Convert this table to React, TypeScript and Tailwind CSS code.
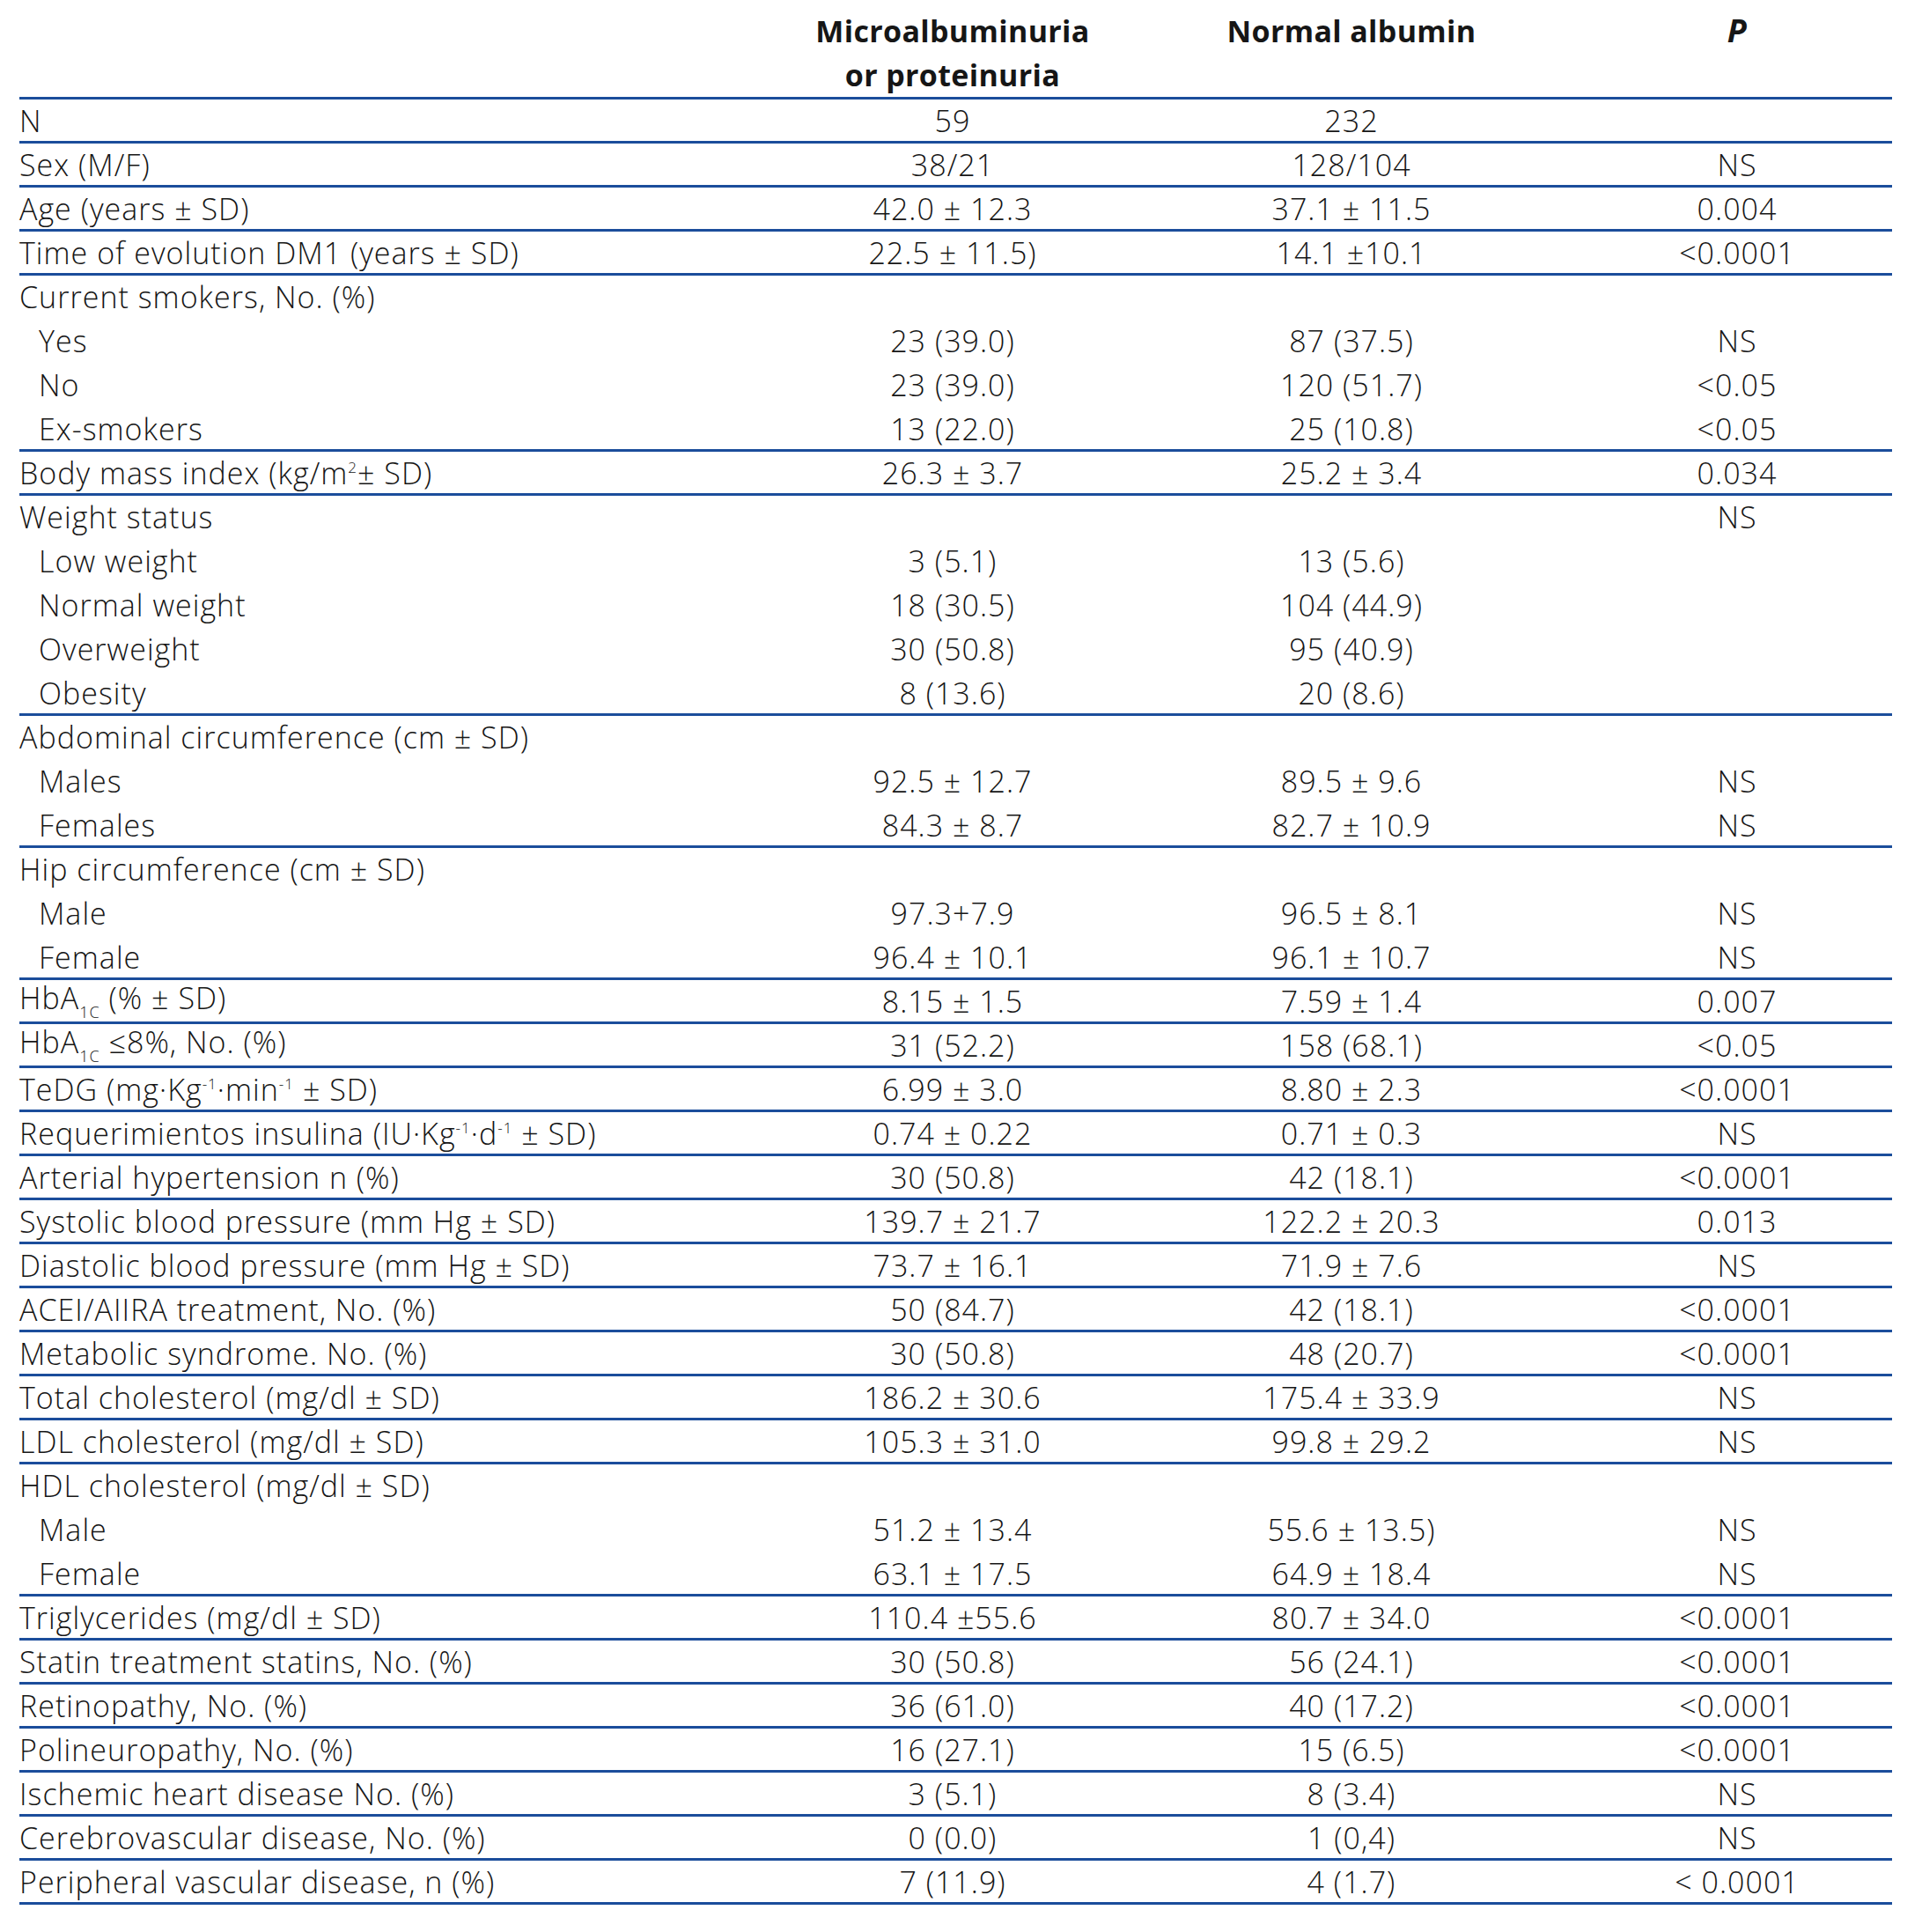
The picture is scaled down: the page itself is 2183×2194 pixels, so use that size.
import React from 'react';

type Row = {
  label: React.ReactNode;
  a?: string;
  b?: string;
  p?: string;
  sub?: boolean; // indented sub-row
  line?: boolean; // group ends here
};

const Sup = ({ children }: { children: React.ReactNode }) => (
  <span className="text-[17px] align-[13px]">{children}</span>
);
const Sub = ({ children }: { children: React.ReactNode }) => (
  <span className="text-[18px] align-[-10px]">{children}</span>
);

const rows: Row[] = [
  { label: 'N', a: '59', b: '232', line: true },
  { label: 'Sex (M/F)', a: '38/21', b: '128/104', p: 'NS', line: true },
  { label: 'Age (years ± SD)', a: '42.0 ± 12.3', b: '37.1 ± 11.5', p: '0.004', line: true },
  { label: 'Time of evolution DM1 (years ± SD)', a: '22.5 ± 11.5)', b: '14.1 ±10.1', p: '<0.0001', line: true },
  { label: 'Current smokers, No. (%)' },
  { label: 'Yes', sub: true, a: '23 (39.0)', b: '87 (37.5)', p: 'NS' },
  { label: 'No', sub: true, a: '23 (39.0)', b: '120 (51.7)', p: '<0.05' },
  { label: 'Ex-smokers', sub: true, a: '13 (22.0)', b: '25 (10.8)', p: '<0.05', line: true },
  {
    label: (
      <>
        Body mass index (kg/m<Sup>2</Sup>± SD)
      </>
    ),
    a: '26.3 ± 3.7',
    b: '25.2 ± 3.4',
    p: '0.034',
    line: true,
  },
  { label: 'Weight status', p: 'NS' },
  { label: 'Low weight', sub: true, a: '3 (5.1)', b: '13 (5.6)' },
  { label: 'Normal weight', sub: true, a: '18 (30.5)', b: '104 (44.9)' },
  { label: 'Overweight', sub: true, a: '30 (50.8)', b: '95 (40.9)' },
  { label: 'Obesity', sub: true, a: '8 (13.6)', b: '20 (8.6)', line: true },
  { label: 'Abdominal circumference (cm ± SD)' },
  { label: 'Males', sub: true, a: '92.5 ± 12.7', b: '89.5 ± 9.6', p: 'NS' },
  { label: 'Females', sub: true, a: '84.3 ± 8.7', b: '82.7 ± 10.9', p: 'NS', line: true },
  { label: 'Hip circumference (cm ± SD)' },
  { label: 'Male', sub: true, a: '97.3+7.9', b: '96.5 ± 8.1', p: 'NS' },
  { label: 'Female', sub: true, a: '96.4 ± 10.1', b: '96.1 ± 10.7', p: 'NS', line: true },
  {
    label: (
      <>
        HbA<Sub>1C</Sub> (% ± SD)
      </>
    ),
    a: '8.15 ± 1.5',
    b: '7.59 ± 1.4',
    p: '0.007',
    line: true,
  },
  {
    label: (
      <>
        HbA<Sub>1C</Sub> ≤8%, No. (%)
      </>
    ),
    a: '31 (52.2)',
    b: '158 (68.1)',
    p: '<0.05',
    line: true,
  },
  {
    label: (
      <>
        TeDG (mg·Kg<Sup>-1</Sup>·min<Sup>-1</Sup> ± SD)
      </>
    ),
    a: '6.99 ± 3.0',
    b: '8.80 ± 2.3',
    p: '<0.0001',
    line: true,
  },
  {
    label: (
      <>
        Requerimientos insulina (IU·Kg<Sup>-1</Sup>·d<Sup>-1</Sup> ± SD)
      </>
    ),
    a: '0.74 ± 0.22',
    b: '0.71 ± 0.3',
    p: 'NS',
    line: true,
  },
  { label: 'Arterial hypertension n (%)', a: '30 (50.8)', b: '42 (18.1)', p: '<0.0001', line: true },
  { label: 'Systolic blood pressure (mm Hg ± SD)', a: '139.7 ± 21.7', b: '122.2 ± 20.3', p: '0.013', line: true },
  { label: 'Diastolic blood pressure (mm Hg ± SD)', a: '73.7 ± 16.1', b: '71.9 ± 7.6', p: 'NS', line: true },
  { label: 'ACEI/AIIRA treatment, No. (%)', a: '50 (84.7)', b: '42 (18.1)', p: '<0.0001', line: true },
  { label: 'Metabolic syndrome. No. (%)', a: '30 (50.8)', b: '48 (20.7)', p: '<0.0001', line: true },
  { label: 'Total cholesterol (mg/dl ± SD)', a: '186.2 ± 30.6', b: '175.4 ± 33.9', p: 'NS', line: true },
  { label: 'LDL cholesterol (mg/dl ± SD)', a: '105.3 ± 31.0', b: '99.8 ± 29.2', p: 'NS', line: true },
  { label: 'HDL cholesterol (mg/dl ± SD)' },
  { label: 'Male', sub: true, a: '51.2 ± 13.4', b: '55.6 ± 13.5)', p: 'NS' },
  { label: 'Female', sub: true, a: '63.1 ± 17.5', b: '64.9 ± 18.4', p: 'NS', line: true },
  { label: 'Triglycerides (mg/dl ± SD)', a: '110.4 ±55.6', b: '80.7 ± 34.0', p: '<0.0001', line: true },
  { label: 'Statin treatment statins, No. (%)', a: '30 (50.8)', b: '56 (24.1)', p: '<0.0001', line: true },
  { label: 'Retinopathy, No. (%)', a: '36 (61.0)', b: '40 (17.2)', p: '<0.0001', line: true },
  { label: 'Polineuropathy, No. (%)', a: '16 (27.1)', b: '15 (6.5)', p: '<0.0001', line: true },
  { label: 'Ischemic heart disease No. (%)', a: '3 (5.1)', b: '8 (3.4)', p: 'NS', line: true },
  { label: 'Cerebrovascular disease, No. (%)', a: '0 (0.0)', b: '1 (0,4)', p: 'NS', line: true },
  { label: 'Peripheral vascular disease, n (%)', a: '7 (11.9)', b: '4 (1.7)', p: '< 0.0001', line: true },
];

const cols = 'grid grid-cols-[869px_382px_524px_352px]';

export default function App() {
  return (
    <div
      className="w-[2183px] min-h-[2194px] bg-white pl-[22px] text-[#161616]"
      style={{ fontFamily: '"Open Sans", "Liberation Sans", sans-serif' }}
    >
      <div className="w-[2127px]">
        {/* header */}
        <div className={`${cols} h-[113px] pt-[10px] border-b-[3px] border-[#1b4d9b] font-bold text-[34px] tracking-[0.01em] leading-[50px]`}>
          <div />
          <div className="text-center">
            Microalbuminuria
            <br />
            or proteinuria
          </div>
          <div className="text-center">Normal albumin</div>
          <div className="text-center italic text-[36px]">P</div>
        </div>

        {rows.map((r, i) => (
          <div
            key={i}
            className={`${cols} h-[50px] items-center border-b-[3px] font-light text-[34px] tracking-[0.03em] leading-none ${
              r.line ? 'border-[#1b4d9b]' : 'border-transparent'
            }`}
          >
            <div className={r.sub ? 'pl-[22px] whitespace-nowrap' : 'whitespace-nowrap'}>{r.label}</div>
            <div className="text-center">{r.a}</div>
            <div className="text-center">{r.b}</div>
            <div className="text-center">{r.p}</div>
          </div>
        ))}
      </div>
    </div>
  );
}
